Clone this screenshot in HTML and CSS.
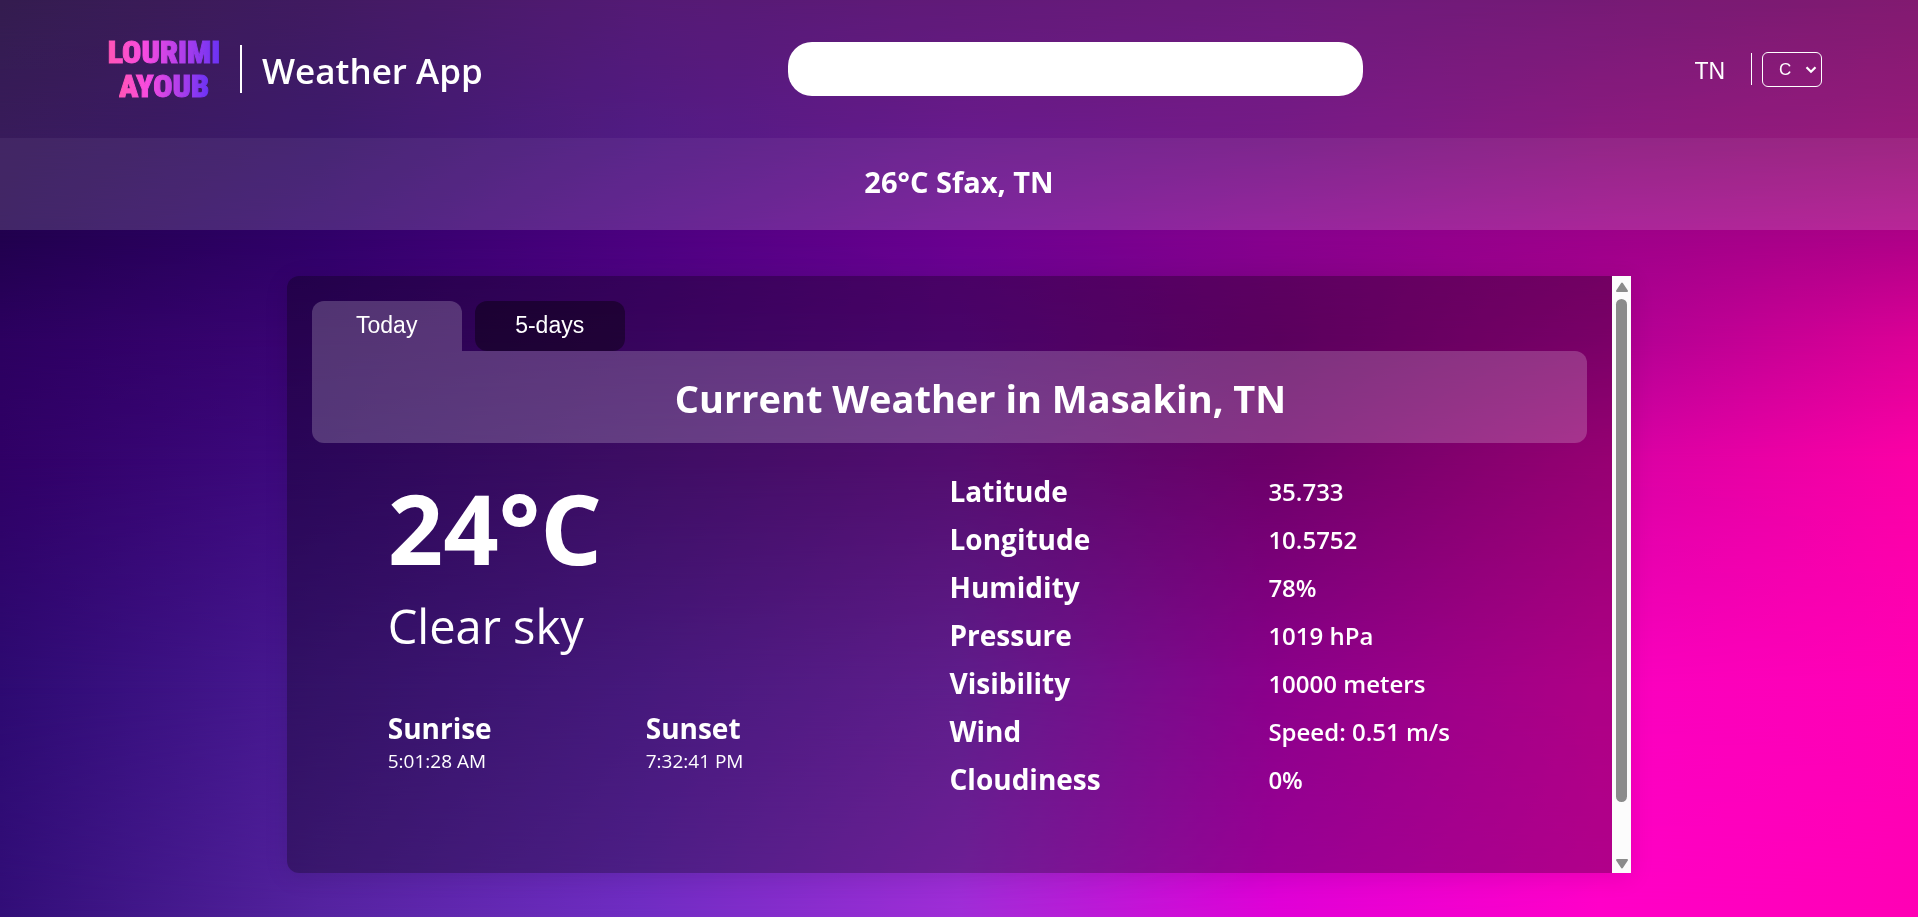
FILE: index.html
```html
<!DOCTYPE html>
<html lang="en">
<head>
<meta charset="utf-8">
<title>Weather App</title>
<link rel="stylesheet" href="styles.css">
</head>
<body>
<div class="backdrop" aria-hidden="true">
  <div class="band band-1"></div>
  <div class="band band-2"></div>
  <div class="band band-3"></div>
  <div class="band band-4"></div>
  <div class="band band-5"></div>
  <div class="band band-6"></div>
  <div class="band band-7"></div>
</div>

<header class="header">
  <div class="brand">
    <div class="logo"><span>LOURIMI</span><span>AYOUB</span></div>
    <span class="brand-rule"></span>
    <span class="brand-name">Weather App</span>
  </div>
  <input class="search" type="text" aria-label="Search city">
  <div class="locale">
    <span class="country">TN</span>
    <span class="locale-rule"></span>
    <div class="unit">
      <select class="unit-select" aria-label="Temperature unit">
        <option>C</option>
        <option>F</option>
      </select>
      <svg class="unit-arrow" viewBox="0 0 12 8" width="12" height="8"><path d="M1.500 1.200 6 5.800l4.500-4.600" fill="none" stroke="#fff" stroke-width="2.200"/></svg>
    </div>
  </div>
</header>

<div class="strip">26°C Sfax, TN</div>

<main class="panel">
  <div class="content">
    <div class="tabs">
      <button class="tab tab-active" type="button">Today</button>
      <button class="tab" type="button">5-days</button>
    </div>
    <h1 class="title">Current Weather in Masakin, TN</h1>
    <div class="details">
      <section class="summary">
        <div class="temperature">24°C</div>
        <div class="condition">Clear sky</div>
        <div class="sun">
          <div><h2 class="sun-label">Sunrise</h2><div class="sun-time">5:01:28 AM</div></div>
          <div><h2 class="sun-label">Sunset</h2><div class="sun-time">7:32:41 PM</div></div>
        </div>
      </section>
      <table class="metrics">
        <tr><th scope="row">Latitude</th><td>35.733</td></tr>
        <tr><th scope="row">Longitude</th><td>10.5752</td></tr>
        <tr><th scope="row">Humidity</th><td>78%</td></tr>
        <tr><th scope="row">Pressure</th><td>1019 hPa</td></tr>
        <tr><th scope="row">Visibility</th><td>10000 meters</td></tr>
        <tr><th scope="row">Wind</th><td>Speed: 0.51 m/s</td></tr>
        <tr><th scope="row">Cloudiness</th><td>0%</td></tr>
      </table>
    </div>
  </div>
  <div class="scrollbar" aria-hidden="true">
    <svg viewBox="0 0 14 11" width="14" height="11"><path d="M7 1.500 12 9H2z" fill="#8b8b8b" stroke="#8b8b8b" stroke-width="2" stroke-linejoin="round"/></svg>
    <div class="track"><div class="thumb"></div></div>
    <svg viewBox="0 0 14 11" width="14" height="11"><path d="M7 9.500 2 2h10z" fill="#8b8b8b" stroke="#8b8b8b" stroke-width="2" stroke-linejoin="round"/></svg>
  </div>
</main>
</body>
</html>
```
FILE: styles.css
```css
* { box-sizing: border-box; }

body {
  margin: 0;
  min-height: 100vh;
  overflow: hidden;
  color: #fff;
  background: #30006a;
  font-family: "Segoe UI", "Open Sans", "Noto Sans", sans-serif;
}

/* Colour field: horizontal gradients cross-faded from top to bottom */
.backdrop { position: fixed; inset: 0; z-index: -1; }
.band { position: absolute; inset: 0; }
.band-1 { background: linear-gradient(90deg, #1e043c, #2c0250, #410066, #50006a, #5c006e, #670067, #740061); }
.band-2 {
  background: linear-gradient(90deg, #220249, #28005c, #3e0276, #57007f, #67007a, #7f0072, #8c006c);
  mask-image: linear-gradient(transparent, #000 15%);
}
.band-3 {
  background: linear-gradient(90deg, #21004e, #300069, #4c0080, #6a0090, #87008e, #9e008a, #b00088);
  mask-image: linear-gradient(transparent 15%, #000 26%);
}
.band-4 {
  background: linear-gradient(90deg, #2c0060, #3a0474, #500686, #680696, #820086, #ae0094, #dc0096);
  mask-image: linear-gradient(transparent 26%, #000 37%);
}
.band-5 {
  background: linear-gradient(90deg, #300066, #3e0a80, #58148f, #7814a0, #9b0096, #d600a4, #fc00a6);
  mask-image: linear-gradient(transparent 37%, #000 50%);
}
.band-6 {
  background: linear-gradient(90deg, #2d0a72, #4a1a94, #6424b2, #882bc8, #c800c8, #fa00c0, #ff00b4);
  mask-image: linear-gradient(transparent 50%, #000 75%);
}
.band-7 {
  background: linear-gradient(90deg, #320e78, #5523a0, #702dc3, #a02dd7, #e100d7, #ff00c8, #ff00b4);
  mask-image: linear-gradient(transparent 75%, #000);
}

.header {
  display: flex;
  justify-content: space-between;
  align-items: center;
  height: 138px;
  padding: 0 5% 0 110px;
  background: rgba(255, 255, 255, 0.1);
}
.brand { display: flex; align-items: center; }
.logo {
  display: flex;
  flex-direction: column;
  align-items: center;
  width: 108px;
  font: 900 32px/34px "Liberation Sans Narrow", "Roboto Condensed", "Liberation Sans", sans-serif;
}
.logo span {
  color: transparent;
  background: linear-gradient(90deg, #ff55b5, #f84be0 32%, #6a32f5);
  background-clip: text;
  -webkit-text-stroke: 1px transparent;
}
.brand-rule { width: 2px; height: 48px; margin: 0 20px 0 22px; background: #fff; }
.brand-name { padding-top: 4px; font-size: 35px; line-height: 48px; font-weight: 600; }

.search {
  width: 30vw;
  height: 54px;
  margin-right: 26px;
  padding: 0 24px;
  border: 0;
  border-radius: 24px;
  background: #fff;
  font-size: 20px;
}

.locale { display: flex; justify-content: flex-end; align-items: center; }
.country { padding-top: 3px; font: 23px/32px "Liberation Sans", Arial, sans-serif; }
.locale-rule { width: 1px; height: 32px; margin: 0 10px 0 26px; background: #fff; }
.unit { position: relative; }
.unit-select {
  display: block;
  width: 60px;
  height: 35px;
  padding: 0 16px;
  border: 1px solid #fff;
  border-radius: 6px;
  appearance: none;
  color: #fff;
  background: transparent;
  font: 17px "Liberation Sans", Arial, sans-serif;
}
.unit-select option { color: #000; }
.unit-arrow { position: absolute; right: 5px; top: 14px; pointer-events: none; }

.strip {
  height: 92px;
  background: rgba(255, 255, 255, 0.15);
  font-size: 29px;
  line-height: 88px;
  font-weight: 700;
  text-align: center;
}

.panel {
  display: flex;
  width: calc(70% + 2px);
  height: 65vh;
  min-height: 597px;
  margin: 46px auto 0;
  border-radius: 12px 0 0 12px;
  background: rgba(0, 0, 0, 0.3);
  box-shadow: 0 4px 24px rgba(0, 0, 0, 0.1);
}
.content { flex: 1; padding: 25px; overflow: hidden; }
.tabs { display: flex; gap: 13px; }
.tab {
  width: 150px;
  height: 50px;
  padding: 0 0 2px;
  border: 0;
  border-radius: 12px;
  color: #fff;
  background: rgba(0, 0, 0, 0.4);
  font: 23px "Liberation Sans", Arial, sans-serif;
}
.tab-active { border-radius: 12px 12px 0 0; background: rgba(255, 255, 255, 0.2); }
.title {
  margin: 0;
  height: 92px;
  padding-left: 62px;
  border-radius: 0 12px 12px 12px;
  background: rgba(255, 255, 255, 0.2);
  font-size: 38px;
  line-height: 94px;
  font-weight: 700;
  text-align: center;
}

.details { display: grid; grid-template-columns: 1fr 1fr; }
.summary { padding: 16px 0 0 76px; }
.temperature { font-size: 97px; line-height: 136px; font-weight: 700; }
.condition { font-size: 47px; line-height: 62px; }
.sun { display: grid; grid-template-columns: 258px 1fr; margin-top: 52px; }
.sun-label { margin: 0; font-size: 28px; line-height: 38px; font-weight: 700; }
.sun-time { font-size: 19px; line-height: 28px; }

.metrics { margin-top: 24px; border-collapse: collapse; table-layout: fixed; width: 100%; }
.metrics th, .metrics td { height: 48px; padding: 0; text-align: left; }
.metrics th { width: 50%; font-size: 28px; font-weight: 700; }
.metrics td { font-size: 24px; font-weight: 600; }

.scrollbar {
  display: flex;
  flex-direction: column;
  align-items: center;
  gap: 6px;
  width: 19px;
  padding: 6px 0 4px;
  background: #fcfcfc;
}
.track { flex: 1; }
.thumb { width: 11px; height: 91%; border-radius: 6px; background: #8b8b8b; }
```
